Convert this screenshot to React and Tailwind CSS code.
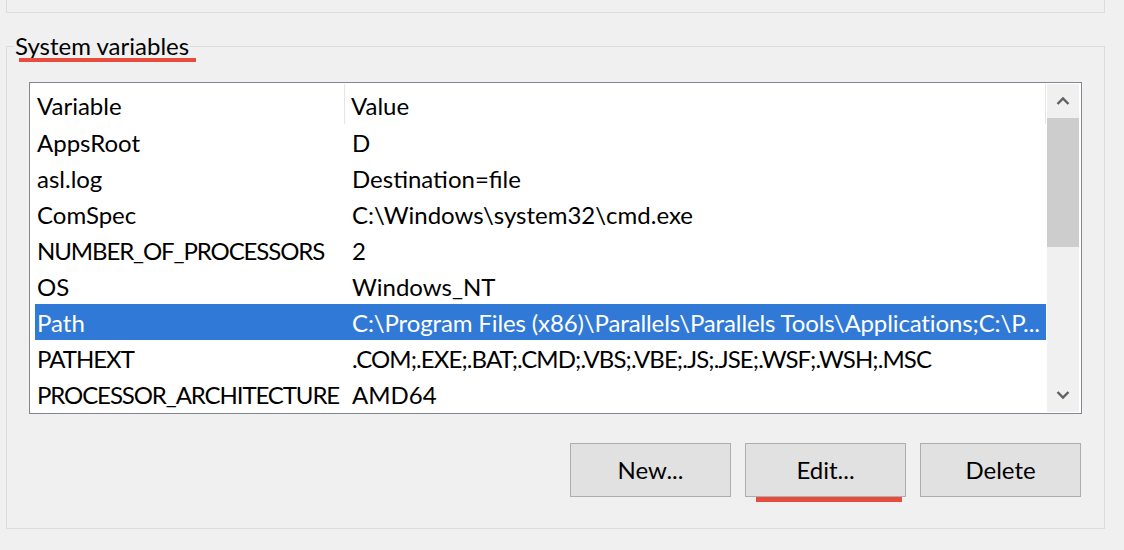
const rows = [
  { name: 'AppsRoot', value: 'D', nameCls: '', valueCls: '' },
  { name: 'asl.log', value: 'Destination=file', nameCls: '', valueCls: '' },
  { name: 'ComSpec', value: 'C:\\Windows\\system32\\cmd.exe', nameCls: '', valueCls: '' },
  { name: 'NUMBER_OF_PROCESSORS', value: '2', nameCls: 'tracking-[-1.1px]', valueCls: '' },
  { name: 'OS', value: 'Windows_NT', nameCls: '', valueCls: '' },
  {
    name: 'Path',
    value: 'C:\\Program Files (x86)\\Parallels\\Parallels Tools\\Applications;C:\\P...',
    nameCls: '',
    valueCls: 'tracking-[-0.12px]',
    selected: true,
  },
  {
    name: 'PATHEXT',
    value: '.COM;.EXE;.BAT;.CMD;.VBS;.VBE;.JS;.JSE;.WSF;.WSH;.MSC',
    nameCls: 'tracking-[-1px]',
    valueCls: 'tracking-[-0.9px]',
  },
  { name: 'PROCESSOR_ARCHITECTURE', value: 'AMD64', nameCls: 'tracking-[-1.1px]', valueCls: '' },
]

function Chevron({ up }) {
  return (
    <svg width="14" height="10" viewBox="0 0 14 10" className="text-[#606060]">
      <path
        d={up ? 'M1.5 8 L7 2.5 L12.5 8' : 'M1.5 2 L7 7.5 L12.5 2'}
        fill="none"
        stroke="currentColor"
        strokeWidth="2.4"
      />
    </svg>
  )
}

function Row({ row }) {
  const sel = row.selected
  return (
    <div className="flex h-[36px] pl-[5px] pr-[1px]">
      <div className={'flex flex-1 items-center pt-[2px] ' + (sel ? 'bg-[#3179d7] text-white' : 'text-black')}>
        <div className={'w-[309px] shrink-0 pl-[2px] whitespace-nowrap overflow-hidden ' + row.nameCls}>
          {row.name}
        </div>
        <div className={'flex-1 min-w-0 pl-[8px] whitespace-nowrap overflow-hidden ' + row.valueCls}>
          {row.value}
        </div>
      </div>
    </div>
  )
}

export default function App() {
  return (
    <div className="w-[1124px] h-[550px] overflow-hidden bg-[#f0f0f0] font-['Lato',sans-serif] text-[24px] text-black">
      {/* bottom edge of the group above */}
      <div className="ml-[6px] w-[1099px] h-[13px] border border-t-0 border-[#dcdcdc]" />

      <fieldset className="ml-[6px] mt-[18px] w-[1099px] border border-[#dcdcdc] pl-[22px] pb-[31px]">
        <legend className="relative ml-[-15px] px-[1px] leading-[30px] text-black">
          System variables
          <span className="absolute left-[5px] top-[27px] w-[177px] h-[4px] bg-[#e84c3d]" />
        </legend>

        <div className="mt-[21px] w-[1053px] h-[332px] border border-[#828790] bg-white flex">
          <div className="flex-1 flex flex-col min-w-0">
            <div className="flex h-[41px] pr-[1px] shrink-0">
              <div className="w-[315px] shrink-0 mt-[1px] h-[40px] border-r border-[#e5e5e5] pl-[7px] pt-[3px] flex items-center">
                Variable
              </div>
              <div className="flex-1 mt-[1px] h-[40px] border-r border-[#e5e5e5] pl-[6px] pt-[3px] flex items-center">
                Value
              </div>
            </div>
            {rows.map((r) => (
              <Row key={r.name} row={r} />
            ))}
          </div>

          <div className="w-[32px] my-[1px] mr-[2px] bg-[#f0f0f0] flex flex-col shrink-0">
            <div className="h-[34px] flex items-center justify-center">
              <Chevron up />
            </div>
            <div className="h-[129px] bg-[#cdcdcd]" />
            <div className="flex-1" />
            <div className="h-[34px] flex items-center justify-center">
              <Chevron />
            </div>
          </div>
        </div>

        <div className="mt-[29px] w-[1052px] flex justify-end gap-[14px]">
          <button className="w-[161px] h-[54px] border border-[#adadad] bg-[#e1e1e1] text-[24px] text-black">
            New...
          </button>
          <div className="relative">
            <button className="w-[161px] h-[54px] border border-[#adadad] bg-[#e1e1e1] text-[24px] text-black">
              Edit...
            </button>
            <span className="absolute left-[11px] top-full w-[146px] h-[5px] bg-[#e84c3d]" />
          </div>
          <button className="w-[161px] h-[54px] border border-[#adadad] bg-[#e1e1e1] text-[24px] text-black">
            Delete
          </button>
        </div>
      </fieldset>
    </div>
  )
}
